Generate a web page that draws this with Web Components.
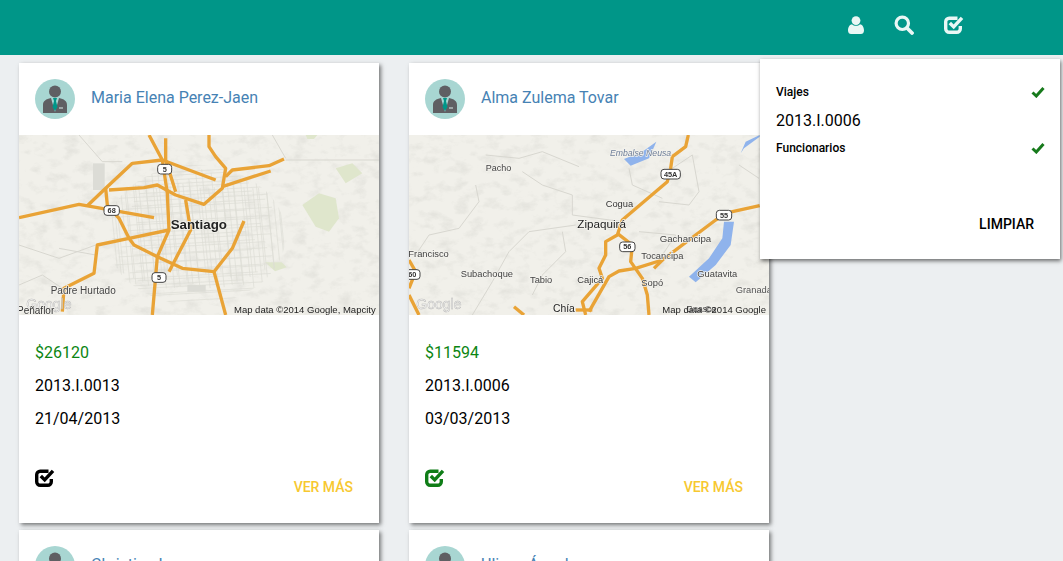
<!DOCTYPE html>
<html lang="es">
<head>
<meta charset="utf-8">
<title>Viajes</title>
<style>
  html, body { margin: 0; height: 100%; overflow: hidden; }
  body { background: #eceff1; font-family: Roboto, "Liberation Sans", sans-serif; }
</style>
</head>
<body>
<app-viajes>
  <tarjeta-viaje nombre="Maria Elena Perez-Jaen" monto="$26120" codigo="2013.I.0013" fecha="21/04/2013">
    <mapa-estatico lugar="santiago"></mapa-estatico>
  </tarjeta-viaje>
  <tarjeta-viaje nombre="Alma Zulema Tovar" monto="$11594" codigo="2013.I.0006" fecha="03/03/2013" marcado>
    <mapa-estatico lugar="zipaquira"></mapa-estatico>
  </tarjeta-viaje>
  <tarjeta-viaje nombre="Christian Lopez" monto="$9840" codigo="2013.I.0021" fecha="14/02/2013">
    <mapa-estatico lugar="santiago"></mapa-estatico>
  </tarjeta-viaje>
  <tarjeta-viaje nombre="Ulises Ángel" monto="$7215" codigo="2013.I.0009" fecha="09/01/2013">
    <mapa-estatico lugar="zipaquira"></mapa-estatico>
  </tarjeta-viaje>
</app-viajes>

<script>
const ICONOS = {
  usuario: `<svg width="16" height="18" viewBox="0 0 16 18"><circle cx="8" cy="4.600" r="4.400" fill="currentColor"/><path d="M0 14.500C0 10.500 2 8.600 4 8.200c1 1 2.500 1.500 4 1.500s3-.5 4-1.500c2 .4 4 2.300 4 6.300C16 17 14.500 18 13 18H3C1.500 18 0 17 0 14.500z" fill="currentColor"/></svg>`,
  buscar: `<svg width="20" height="20" viewBox="0 0 20 20" fill="none" stroke="currentColor"><circle cx="8.300" cy="8.300" r="6.200" stroke-width="3.200"/><path d="M13 13l5 5" stroke-width="3.800" stroke-linecap="round"/></svg>`,
  marcar: `<svg width="20" height="20" viewBox="0 0 20 20" fill="none" stroke="currentColor"><path d="M13.500 3.200H5.200A3.500 3.500 0 0 0 1.700 6.700v7.100a3.500 3.500 0 0 0 3.500 3.500h7.600a3.500 3.500 0 0 0 3.500-3.500V11" stroke-width="3.400"/><path d="M5.800 8l3.900 3.900L18 2.800" stroke-width="3.400"/></svg>`,
  check: `<svg width="14" height="12" viewBox="0 0 14 12" fill="none" stroke="currentColor"><path d="M1.500 6.500l3.800 3.500L12.500 2" stroke-width="3"/></svg>`,
};

class AppIcono extends HTMLElement {
  connectedCallback() {
    this.attachShadow({ mode: 'open' }).innerHTML = `
      <style>:host { display: inline-flex; line-height: 0; }</style>
      ${ICONOS[this.getAttribute('nombre')]}
    `;
  }
}
customElements.define('app-icono', AppIcono);

class BarraSuperior extends HTMLElement {
  connectedCallback() {
    this.attachShadow({ mode: 'open' }).innerHTML = `
      <style>
        :host {
          display: flex;
          justify-content: flex-end;
          align-items: center;
          gap: 30px;
          height: 55px;
          padding: 0 99px 6px 0;
          box-sizing: border-box;
          background: #009688;
          color: #e9f7f5;
        }
      </style>
      <app-icono nombre="usuario"></app-icono>
      <app-icono nombre="buscar"></app-icono>
      <app-icono nombre="marcar"></app-icono>
    `;
  }
}
customElements.define('barra-superior', BarraSuperior);

class PanelFiltros extends HTMLElement {
  connectedCallback() {
    this.attachShadow({ mode: 'open' }).innerHTML = `
      <style>
        :host {
          position: absolute;
          top: 59px;
          left: 760px;
          width: 300px;
          height: 200px;
          box-sizing: border-box;
          padding: 24px 15px 0 16px;
          background: #fff;
          box-shadow: 1px 2px 4px rgba(0, 0, 0, .55);
          color: #000;
        }
        .fila {
          display: flex;
          justify-content: space-between;
          align-items: center;
          height: 18px;
          font-size: 12px;
          font-weight: 500;
        }
        .fila app-icono { color: #177a1c; }
        .valor { font-size: 16px; line-height: 20px; margin: 10px 0 8px; }
        .limpiar {
          margin: 58px 11px 0 0;
          text-align: right;
          font-size: 14px;
          font-weight: 500;
          line-height: 18px;
        }
      </style>
      <div class="fila"><span>Viajes</span><app-icono nombre="check"></app-icono></div>
      <div class="valor">2013.I.0006</div>
      <div class="fila"><span>Funcionarios</span><app-icono nombre="check"></app-icono></div>
      <div class="limpiar">LIMPIAR</div>
    `;
  }
}
customElements.define('panel-filtros', PanelFiltros);

class TarjetaViaje extends HTMLElement {
  connectedCallback() {
    const a = (n) => this.getAttribute(n) || '';
    this.attachShadow({ mode: 'open' }).innerHTML = `
      <style>
        :host {
          display: flex;
          flex-direction: column;
          height: 460px;
          background: #fff;
          box-shadow: 2px 2px 4px rgba(0, 0, 0, .5);
          color: #000;
        }
        .cabecera {
          display: flex;
          align-items: center;
          gap: 16px;
          height: 72px;
          padding: 0 16px;
        }
        .nombre { font-size: 16px; line-height: 20px; margin-bottom: 2px; color: #4682b4; }
        .avatar { flex: none; display: block; }
        .datos { padding: 21px 16px 0; font-size: 16px; line-height: 33px; }
        .monto { color: #0b8512; }
        .pie {
          display: flex;
          justify-content: space-between;
          align-items: flex-start;
          margin-top: 33px;
          padding: 0 26px 0 16px;
          color: ${this.hasAttribute('marcado') ? '#0f7d17' : '#000'};
        }
        .mas {
          margin-top: 10px;
          font-size: 14px;
          font-weight: 500;
          line-height: 18px;
          color: #f7c830;
        }
      </style>
      <div class="cabecera">
        <svg class="avatar" width="40" height="40" viewBox="0 0 40 40">
          <circle cx="20" cy="20" r="20" fill="#a8d6d2"/>
          <circle cx="20" cy="12.500" r="6" fill="#5f5f63"/>
          <path d="M8 34v-8c0-4 3-6 8-7l4 14 4-14c5 1 8 3 8 7v8z" fill="#5f5f63"/>
          <path d="M18 19h4l-1 3 1.500 6-2.500 4-2.500-4 1.500-6z" fill="#009688"/>
          <path d="M24 29h4" stroke="#d9ecea" stroke-width="1"/>
        </svg>
        <span class="nombre">${a('nombre')}</span>
      </div>
      <slot></slot>
      <div class="datos">
        <div class="monto">${a('monto')}</div>
        <div>${a('codigo')}</div>
        <div>${a('fecha')}</div>
      </div>
      <div class="pie">
        <app-icono nombre="marcar"></app-icono>
        <span class="mas">VER MÁS</span>
      </div>
    `;
  }
}
customElements.define('tarjeta-viaje', TarjetaViaje);

// Coordenadas en 1080x540, el mapa se pinta a un tercio
const MAPAS = {
  santiago: {
    ciudad: true,
    verde: ['M850 210l50-35 50 15 10 60-30 40-40-15z', 'M738 382l50 0 15 15-35 12z', 'M950 100l50-15 30 30-50 30z', 'M860 0h35l-10 12h-20z'],
    gris: ['M222 85h35v80h-35z', 'M505 450h55v20h-55z'],
    secundarios: ['M180 0l70 80 60 0', 'M800 75h280', 'M760 0l40 70', 'M0 330l120 40 110-40', 'M130 460l-60-40-70 30', 'M230 360l-110-20'],
    caminos: [
      'M0 248L180 208L405 248',
      'M205 212L260 160L340 85L430 75L590 135',
      'M260 160L265 210L300 250L330 310L345 330L415 365L490 400L585 410L640 340L675 258',
      'M390 0L430 75L445 175L450 285L415 365L400 540',
      'M440 10L440 75L470 170',
      'M270 165L375 158L415 150L470 180L555 208L610 160L620 100L590 65L570 35L570 0',
      'M610 155L755 108',
      'M620 125L640 105L750 92L795 72',
      'M500 195L515 285L450 410',
      'M450 285L330 310L235 330L225 415L135 460L130 530',
      'M585 410L620 540',
    ],
    escudos: [[437, 102, '5'], [278, 226, '68'], [420, 427, '5']],
    etiquetas: [
      ['Santiago', 455, 281, 40, 700, '#222'],
      ['Padre Hurtado', 95, 476, 30, 400, '#444'],
      ['Peñaflor', -6, 536, 30, 400, '#333'],
    ],
    credito: ['Map data ©2014 Google, Mapcity', 645, 535, 28.500],
  },
  zipaquira: {
    agua: [
      'M645 72L700 50L742 20L720 70L665 92z',
      'M995 55L1010 20L1052 0V5L1005 40z',
      'M945 260H975L965 330L920 390L860 442L840 425L900 370L940 310z',
    ],
    secundarios: [
      'M230 60L330 70L400 50L510 95', 'M340 110L400 150L490 180L490 240L640 260',
      'M200 150L210 200L150 280L60 300L20 360', 'M500 270L360 290L300 350L250 440L190 540',
      'M760 120L850 60L870 170L840 210L750 200', 'M660 100L670 150L760 190',
      'M690 290L800 300L760 360', 'M460 290L470 350L400 420L370 480', 'M990 90L1050 130',
    ],
    caminos: [
      'M838 0L830 35L790 65L785 100L775 140L640 255L625 300L590 320L590 360L570 400L580 430L520 500L530 540',
      'M625 295L670 330L665 380L700 430L715 480L720 540',
      'M540 530L600 425L630 408L680 400L760 375L920 255L960 232L1052 212',
      'M760 375L735 400',
      'M0 375L20 410L0 460',
      'M0 480L30 540',
      'M315 515L345 540',
      'M500 525H550',
    ],
    escudos: [[785, 117, '45A'], [945, 240, '55'], [655, 335, '56'], [10, 418, '60']],
    etiquetas: [
      ['Embalse Neusa', 603, 63, 26, 400, '#6f7f99', 'italic'],
      ['Pacho', 230, 108, 27, 400, '#444'],
      ['Cogua', 590, 215, 28, 400, '#333'],
      ['Zipaquirá', 505, 279, 35, 400, '#222'],
      ['Gachancipa', 752, 320, 29, 400, '#444'],
      ['Francisco', -2, 366, 28, 400, '#444'],
      ['Subachoque', 155, 425, 28, 400, '#444'],
      ['Tabio', 363, 445, 28, 400, '#444'],
      ['Cajicá', 505, 445, 28, 400, '#333'],
      ['Tocancipa', 697, 372, 28, 400, '#444'],
      ['Sopó', 697, 452, 28, 400, '#444'],
      ['Guatavita', 865, 425, 28, 400, '#444'],
      ['Granada', 980, 475, 28, 400, '#555'],
      ['Chía', 432, 530, 31, 400, '#222'],
      ['Guasca', 832, 530, 26, 400, '#444'],
    ],
    credito: ['Map data ©2014 Google', 760, 535, 28.500],
  },
};

class MapaEstatico extends HTMLElement {
  connectedCallback() {
    const d = MAPAS[this.getAttribute('lugar')];
    const id = 'terreno-' + this.getAttribute('lugar');
    this.attachShadow({ mode: 'open' }).innerHTML = `
      <style>
        :host { display: block; height: 180px; overflow: hidden; background: #f1f0ea; }
        svg { display: block; filter: blur(.35px); }
        text { font-family: "Liberation Sans", sans-serif; }
        .etiqueta { paint-order: stroke; stroke: #f4f3ee; stroke-width: 4px; }
      </style>
      <svg width="360" height="180" viewBox="0 0 1080 540">
        <defs>
          <filter id="${id}" x="0" y="0" width="100%" height="100%">
            <feTurbulence type="fractalNoise" baseFrequency=".022 .035" numOctaves="4" seed="${d.ciudad ? 4 : 9}"/>
            <feColorMatrix values="0 0 0 0 .6  0 0 0 0 .6  0 0 0 0 .56  3 0 0 0 -1.450"/>
          </filter>
          <clipPath id="${id}-urbe"><ellipse cx="530" cy="300" rx="270" ry="210"/></clipPath>
        </defs>
        <rect width="1080" height="540" fill="#f1f0ea"/>
        <rect width="1080" height="540" filter="url(#${id})" opacity=".3"/>
        ${(d.verde || []).map(p => `<path d="${p}" fill="#dfe6cc"/>`).join('')}
        ${(d.gris || []).map(p => `<path d="${p}" fill="#dcdcd6"/>`).join('')}
        ${d.ciudad ? this.calles(id) : ''}
        ${d.secundarios.map(p => `<path d="${p}" fill="none" stroke="#d8d7d0" stroke-width="3"/>`).join('')}
        ${(d.agua || []).map(p => `<path d="${p}" fill="#8fb3ec"/>`).join('')}
        ${d.caminos.map(p => `<path d="${p}" fill="none" stroke="#e9a336" stroke-width="10" stroke-linejoin="round"/>`).join('')}
        ${d.escudos.map(e => this.escudo(e)).join('')}
        <text x="22" y="522" font-size="42" fill="#fff" stroke="#aaa" stroke-width="1.500" opacity=".8">Google</text>
        ${d.etiquetas.map(([t, x, y, s, w, c, st]) => `<text class="etiqueta" x="${x}" y="${y}" font-size="${s}" font-weight="${w}" fill="${c}" font-style="${st || 'normal'}">${t}</text>`).join('')}
        <text x="${d.credito[1]}" y="${d.credito[2]}" font-size="${d.credito[3]}" fill="#222">${d.credito[0]}</text>
      </svg>
    `;
  }

  // Calles finas del centro, con algo de desorden para que no parezca una reja
  calles(id) {
    let p = '';
    for (let i = 0; i < 46; i++) {
      const x = 265 + i * 12 + Math.sin(i * 2.300) * 5;
      const ini = 100 + Math.abs(Math.sin(i * 1.700)) * 60;
      p += `M${x.toFixed(1)} ${ini.toFixed(1)}L${(x + 30).toFixed(1)} ${(ini + 300).toFixed(1)}`;
    }
    for (let i = 0; i < 34; i++) {
      const y = 105 + i * 12 + Math.sin(i * 3.100) * 4;
      const ini = 270 + Math.abs(Math.sin(i * 1.300)) * 90;
      p += `M${ini.toFixed(1)} ${y.toFixed(1)}L${(ini + 400).toFixed(1)} ${(y - 22).toFixed(1)}`;
    }
    return `<path clip-path="url(#${id}-urbe)" d="${p}" stroke="#dddcd5" stroke-width="2" fill="none"/>`;
  }

  escudo([x, y, t]) {
    const w = t.length > 2 ? 58 : t.length > 1 ? 46 : 42;
    return `<rect x="${x - w / 2}" y="${y - 14}" width="${w}" height="29" rx="9" fill="#fff" stroke="#444" stroke-width="3"/>
      <text x="${x}" y="${y + 8}" font-size="22" font-weight="700" fill="#333" text-anchor="middle">${t}</text>`;
  }
}
customElements.define('mapa-estatico', MapaEstatico);

class AppViajes extends HTMLElement {
  connectedCallback() {
    this.attachShadow({ mode: 'open' }).innerHTML = `
      <style>
        :host { display: block; position: relative; height: 561px; overflow: hidden; }
        .rejilla {
          display: grid;
          grid-template-columns: repeat(2, 360px);
          column-gap: 30px;
          row-gap: 7px;
          padding: 8px 0 0 19px;
        }
      </style>
      <barra-superior></barra-superior>
      <div class="rejilla"><slot></slot></div>
      <panel-filtros></panel-filtros>
    `;
  }
}
customElements.define('app-viajes', AppViajes);
</script>
</body>
</html>
